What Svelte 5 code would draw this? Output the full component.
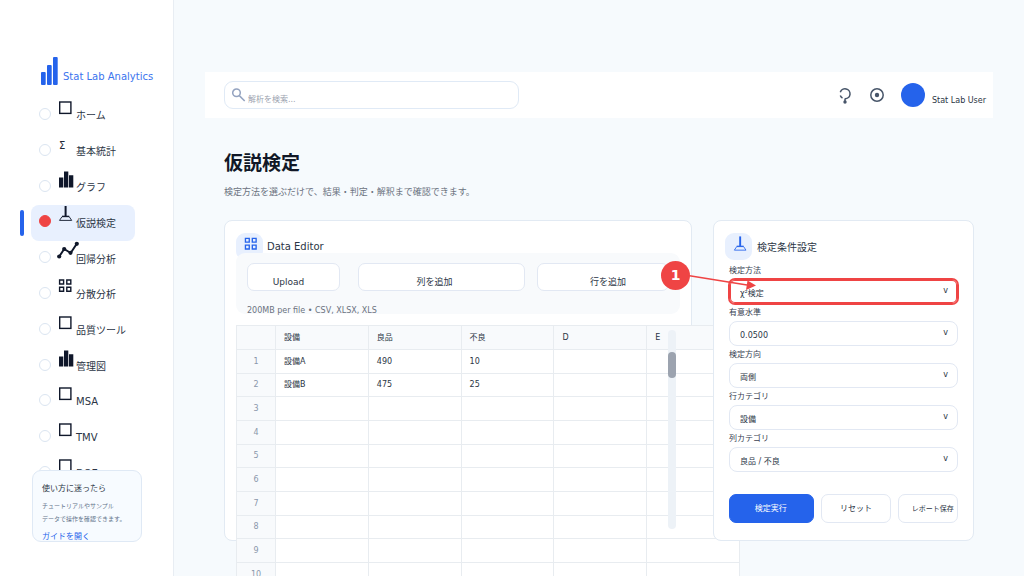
<script>
  const menu = [
    { name: 'ホーム', icon: 'square' },
    { name: '基本統計', icon: 'sigma' },
    { name: 'グラフ', icon: 'bars' },
    { name: '仮説検定', icon: 'scale' },
    { name: '回帰分析', icon: 'line' },
    { name: '分散分析', icon: 'grid' },
    { name: '品質ツール', icon: 'square' },
    { name: '管理図', icon: 'bars' },
    { name: 'MSA', icon: 'square' },
    { name: 'TMV', icon: 'square' },
    { name: 'DOE', icon: 'square' }
  ];
  let current = $state('仮説検定');

  const columns = ['設備', '良品', '不良', 'D', 'E'];
  const data = [
    ['設備A', '490', '10'],
    ['設備B', '475', '25']
  ];
  const rowNumbers = [1, 2, 3, 4, 5, 6, 7, 8, 9, 10];

  const fields = [
    { id: 'method', label: '検定方法', options: ['χ²検定', 't検定'] },
    { id: 'alpha', label: '有意水準', options: ['0.0500', '0.0100'] },
    { id: 'side', label: '検定方向', options: ['両側', '片側'] },
    { id: 'row', label: '行カテゴリ', options: ['設備'] },
    { id: 'col', label: '列カテゴリ', options: ['良品 / 不良'] }
  ];
</script>

{#snippet icon(name)}
  <svg class="icon" viewBox="0 0 22 22" width="22" height="22" aria-hidden="true">
    {#if name === 'square'}
      <rect x="3.700" y="5" width="11.200" height="11.400" fill="none" stroke="currentColor" stroke-width="1.400" />
    {:else if name === 'bars'}
      <path d="M3 8.500h4.300v10H3zM8 2.500h4.300v16H8zM13 6.200h4.300v12.300H13z" fill="currentColor" />
    {:else if name === 'scale'}
      <path d="M8.600 2h2v10h-2z" fill="currentColor" />
      <path d="M6 12.700h7.200l2.500 3.700H3.500z" fill="none" stroke="currentColor" stroke-width="0.900" />
      <path d="M6 12.300h7.200" stroke="currentColor" stroke-width="1.200" />
    {:else if name === 'line'}
      <path d="M3.200 16.500 8.200 9l6.500 4L20.600 4" fill="none" stroke="currentColor" stroke-width="2" />
      <circle cx="3.200" cy="16.500" r="2.100" fill="currentColor" />
      <circle cx="8.200" cy="9" r="2.100" fill="currentColor" />
      <circle cx="14.500" cy="12.800" r="2.100" fill="currentColor" />
      <circle cx="20.800" cy="3.800" r="2.100" fill="currentColor" />
    {:else if name === 'grid'}
      <path
        d="M3.600 4h4v4h-4zM10.800 4h4v4h-4zM3.600 11.200h4v4h-4zM10.800 11.200h4v4h-4z"
        fill="none" stroke="currentColor" stroke-width="1.400" />
    {/if}
  </svg>
{/snippet}

<div class="page">
  <aside class="sidebar">
    <div class="brand">
      <svg viewBox="0 0 17 28" width="17" height="28" aria-hidden="true">
        <rect x="0" y="15" width="4.700" height="13" rx="1" />
        <rect x="6" y="8" width="4.700" height="20" rx="1" />
        <rect x="12" y="0" width="4.700" height="28" rx="1" />
      </svg>
      <span>Stat Lab Analytics</span>
    </div>

    <nav class="menu">
      {#each menu as item}
        <label class="item" class:active={current === item.name}>
          <input type="radio" name="menu" value={item.name} bind:group={current} />
          {#if item.icon === 'sigma'}
            <span class="icon sigma">Σ</span>
          {:else}
            {@render icon(item.icon)}
          {/if}
          <span class="name">{item.name}</span>
        </label>
      {/each}
    </nav>

    <div class="help">
      <h2>使い方に迷ったら</h2>
      <p>チュートリアルやサンプル<br />データで操作を確認できます。</p>
      <a href="#guide">ガイドを開く</a>
    </div>
  </aside>

  <main>
    <header class="topbar">
      <div class="search">
        <svg viewBox="0 0 14 14" width="14" height="14" aria-hidden="true">
          <circle cx="4.500" cy="4.800" r="3.800" />
          <path d="M7.300 7.600 12.700 13" />
        </svg>
        <input type="text" placeholder="解析を検索..." aria-label="解析を検索" />
      </div>
      <div class="user">
        <button class="plain" aria-label="ヒント">
          <svg viewBox="0 0 16 18" width="16" height="18">
            <path d="M3.300 6.200A5 5 0 1 1 8 12.800M3.300 9.500A5 5 0 0 0 5.500 12" />
            <path d="M8 12.500v3" />
            <circle cx="8" cy="16" r="1.700" class="dot" />
          </svg>
        </button>
        <button class="plain" aria-label="設定">
          <svg viewBox="0 0 16 18" width="16" height="18">
            <circle cx="8" cy="9" r="6.200" />
            <circle cx="8" cy="9" r="2.200" class="dot" />
          </svg>
        </button>
        <span class="avatar"></span>
        <span class="username">Stat Lab User</span>
      </div>
    </header>

    <div class="content">
      <h1>仮説検定</h1>
      <p class="lead">検定方法を選ぶだけで、結果・判定・解釈まで確認できます。</p>

      <div class="cards">
        <section class="card editor">
          <div class="cardTitle">
            <span class="badge">{@render icon('grid')}</span>
            <h2>Data Editor</h2>
          </div>
          <div class="toolbar">
            <div class="tools">
              <button>Upload</button>
              <button>列を追加</button>
              <button>行を追加</button>
            </div>
            <p>200MB per file • CSV, XLSX, XLS</p>
          </div>
          <div class="sheet">
            <table>
              <thead>
                <tr>
                  <th class="num"></th>
                  {#each columns as column}
                    <th>{column}</th>
                  {/each}
                </tr>
              </thead>
              <tbody>
                {#each rowNumbers as n, i}
                  <tr>
                    <th class="num">{n}</th>
                    {#each columns as column, j}
                      <td>{data[i]?.[j] ?? ''}</td>
                    {/each}
                  </tr>
                {/each}
              </tbody>
            </table>
            <div class="scrollbar"><div class="thumb"></div></div>
          </div>
        </section>

        <section class="card settings">
          <div class="cardTitle">
            <span class="badge">{@render icon('scale')}</span>
            <h2>検定条件設定</h2>
          </div>
          <div class="form">
            {#each fields as field, i}
              <div class="field" class:marked={i === 0}>
                <label for={field.id}>{field.label}</label>
                <div class="select">
                  <select id={field.id}>
                    {#each field.options as option}
                      <option>{option}</option>
                    {/each}
                  </select>
                  <span class="arrow">v</span>
                </div>
                {#if i === 0}
                  <svg class="callout" viewBox="0 0 100 32" width="100" height="32" aria-hidden="true">
                    <path d="M28 15.500 87 25" stroke="#ef4444" stroke-width="1.700" />
                    <path d="M87.500 20.500 96 25.500l-10 4.500z" fill="#ef4444" />
                    <circle cx="15.500" cy="15.500" r="14.500" fill="#ef4444" />
                    <text x="15.500" y="20" text-anchor="middle">1</text>
                  </svg>
                {/if}
              </div>
            {/each}
            <div class="actions">
              <button class="primary">検定実行</button>
              <button>リセット</button>
              <button class="report">レポート保存</button>
            </div>
          </div>
        </section>
      </div>
    </div>
  </main>
</div>

<style>
  :global(body) {
    background: #f6fafd;
  }

  .page {
    display: flex;
    height: 100vh;
    overflow: hidden;
    color: #2b3545;
    font-family: "DejaVu Sans", "Noto Sans CJK JP", sans-serif;
    font-size: 8px;
  }

  h1, h2, p {
    margin: 0;
  }
  h2 {
    font-weight: 400;
  }
  button, input, select {
    font: inherit;
    color: inherit;
    box-sizing: border-box;
    margin: 0;
  }
  button {
    background: #fff;
    border: 1px solid #e2e8f3;
    border-radius: 7px;
    padding: 0;
    white-space: nowrap;
  }

  /* sidebar */
  .sidebar {
    position: relative;
    flex: 0 0 173px;
    background: #fff;
    border-right: 1px solid #e8edf3;
    padding-top: 57px;
  }
  .brand {
    display: flex;
    align-items: flex-end;
    gap: 5px;
    padding-left: 41px;
    margin-bottom: 13px;
    color: #3b74ee;
    font-size: 10px;
    line-height: 16px;
  }
  .brand svg {
    fill: #2563eb;
  }
  .menu {
    display: flex;
    flex-direction: column;
    height: 394px;
    margin: 0 38px 0 31px;
    font-size: 10px;
  }
  .item {
    position: relative;
    display: flex;
    flex: 1 1 0;
    min-height: 0;
    align-items: center;
    padding: 0 0 4px 8px;
    box-sizing: border-box;
    border-radius: 8px;
    white-space: nowrap;
  }
  .item.active {
    background: #e8f0fe;
  }
  .item.active::before {
    content: "";
    position: absolute;
    left: -11px;
    top: 5px;
    bottom: 5px;
    width: 4px;
    border-radius: 2px;
    background: #2563eb;
  }
  .item input {
    appearance: none;
    width: 12px;
    height: 12px;
    border: 1px solid #dbe5f1;
    border-radius: 50%;
    background: #fff;
  }
  .item input:checked {
    background: #ef4444;
    border-color: #ef4444;
  }
  .item .icon {
    flex: none;
    width: 22px;
    margin: 0 -2px 12px 5px;
    color: #0f172a;
    overflow: visible;
  }
  .item .sigma {
    box-sizing: border-box;
    padding-left: 3px;
    margin-bottom: 8px;
    color: #1f2937;
  }
  .name {
    padding-top: 2px;
  }

  .help {
    position: absolute;
    left: 32px;
    right: 31px;
    bottom: 34px;
    height: 72px;
    box-sizing: border-box;
    padding: 11px 0 0 9px;
    border: 1px solid #dfe9f5;
    border-radius: 9px;
    background: #f7fbff;
    line-height: 13px;
  }
  .help h2 {
    font-size: 8px;
  }
  .help p {
    padding: 4px 0 5px;
    color: #64748b;
    font-size: 6px;
    white-space: nowrap;
  }
  .help a {
    color: #2563eb;
    text-decoration: none;
  }

  /* top bar */
  main {
    flex: 1;
    min-width: 0;
    padding: 72px 31px 0;
  }
  .topbar {
    display: flex;
    align-items: center;
    justify-content: space-between;
    height: 46px;
    padding: 0 7px 0 19px;
    background: #fff;
  }
  .search {
    display: flex;
    align-items: center;
    gap: 2px;
    flex: 0 1 295px;
    height: 28px;
    box-sizing: border-box;
    padding: 0 7px;
    border: 1px solid #e0eaf6;
    border-radius: 9px;
  }
  .search svg {
    fill: none;
    stroke: #94a3c0;
    stroke-width: 1.5;
  }
  .search input {
    flex: 1;
    border: 0;
    padding: 9px 0 0;
    outline: 0;
    background: none;
  }
  .search input::placeholder {
    color: #9ca3af;
  }
  .user {
    display: flex;
    align-items: center;
    gap: 16px;
  }
  .plain {
    display: flex;
    border: 0;
    background: none;
  }
  .plain svg {
    fill: none;
    stroke: #475569;
    stroke-width: 1.5;
  }
  .plain .dot {
    fill: #475569;
    stroke: none;
  }
  .avatar {
    width: 24px;
    height: 24px;
    border-radius: 50%;
    background: #2563eb;
  }
  .username {
    margin-left: -9px;
    padding-top: 10px;
  }

  /* page content */
  .content {
    padding: 31px 19px 0;
  }
  h1 {
    color: #111827;
    font-size: 19px;
    line-height: 28px;
  }
  .lead {
    margin: 6px 0 19px;
    color: #6b7280;
    font-size: 9px;
    line-height: 18px;
  }
  .cards {
    display: grid;
    grid-template-columns: minmax(0, 468fr) minmax(0, 261fr);
    gap: 21px;
  }
  .card {
    position: relative;
    padding: 12px 11px;
    border: 1px solid #e2eaf3;
    border-radius: 8px;
    background: #fff;
  }
  .cardTitle {
    display: flex;
    align-items: center;
    gap: 4px;
    height: 27px;
  }
  .cardTitle h2 {
    font-size: 10px;
  }
  .badge {
    display: flex;
    justify-content: center;
    width: 27px;
    height: 27px;
    border-radius: 9px;
    background: #e8f0fe;
    color: #2563eb;
  }
  .badge .icon {
    margin-left: 6px;
    margin-top: 1px;
  }
  .settings .cardTitle {
    gap: 5px;
    margin-bottom: 1px;
  }

  .toolbar {
    position: relative;
    margin-top: -7px;
    padding: 10px 11px 0;
    height: 51px;
    border-radius: 9px;
    background: #f8fafc;
  }
  .tools {
    display: grid;
    grid-template-columns: 93fr 173fr 132fr;
    column-gap: 12px;
    font-size: 9px;
  }
  .tools button {
    height: 28px;
    padding: 9px 10px 0 0;
  }
  .tools button:nth-child(2) {
    margin-left: 6px;
    padding-right: 14px;
  }
  .tools button:nth-child(3) {
    padding: 9px 0 0 10px;
  }
  .toolbar p {
    margin-top: 14px;
    color: #6b7280;
    line-height: 12px;
  }

  .sheet {
    position: relative;
    height: 0;
    margin-top: 11px;
  }
  table {
    width: 504px;
    border-collapse: collapse;
    table-layout: fixed;
    background: #fff;
  }
  th, td {
    height: 23px;
    padding: 0 8px;
    border: 1px solid #e8ecf0;
    font-weight: 400;
    text-align: left;
    line-height: 12px;
  }
  th {
    background: #f8fafc;
  }
  .num {
    width: 22px;
    color: #8a97ab;
    text-align: center;
  }
  tbody tr:nth-child(3n + 2) > * {
    height: 22px;
  }
  .scrollbar {
    position: absolute;
    top: 5px;
    right: 4px;
    width: 8px;
    height: 199px;
    padding-top: 22px;
    box-sizing: border-box;
    border-radius: 4px;
    background: #edf2f7;
  }
  .thumb {
    height: 26px;
    border-radius: 4px;
    background: #9ca3af;
  }

  /* test settings */
  .form {
    padding: 1px 4px 5px;
  }
  .field {
    position: relative;
  }
  .field label {
    display: block;
    color: #374151;
    line-height: 17px;
  }
  .select {
    display: grid;
    align-items: center;
  }
  .select > * {
    grid-area: 1 / 1;
  }
  select {
    appearance: none;
    width: 100%;
    height: 25px;
    padding: 3px 10px 0;
    border: 1px solid #e2e8f3;
    border-radius: 8px;
    background: #fff;
  }
  .marked select {
    border-color: #ef4444;
    border-radius: 6px;
    box-shadow: 0 0 0 1px #ef4444, inset 0 0 0 1px #ef4444;
  }
  .arrow {
    justify-self: end;
    padding: 0 10px 3px 0;
    pointer-events: none;
  }
  .callout {
    position: absolute;
    left: -69px;
    top: -2px;
    z-index: 1;
    pointer-events: none;
  }
  .callout text {
    fill: #fff;
    font-size: 14px;
    font-weight: 700;
  }
  .actions {
    display: grid;
    grid-template-columns: 85fr 69fr 60fr;
    gap: 7px;
    margin-top: 22px;
  }
  .actions button {
    height: 29px;
    padding-bottom: 2px;
  }
  .actions .primary {
    padding-right: 2px;
    border-color: #2563eb;
    background: #2563eb;
    color: #fff;
  }
  .actions .report {
    padding-left: 10px;
    font-size: 7px;
  }
</style>
